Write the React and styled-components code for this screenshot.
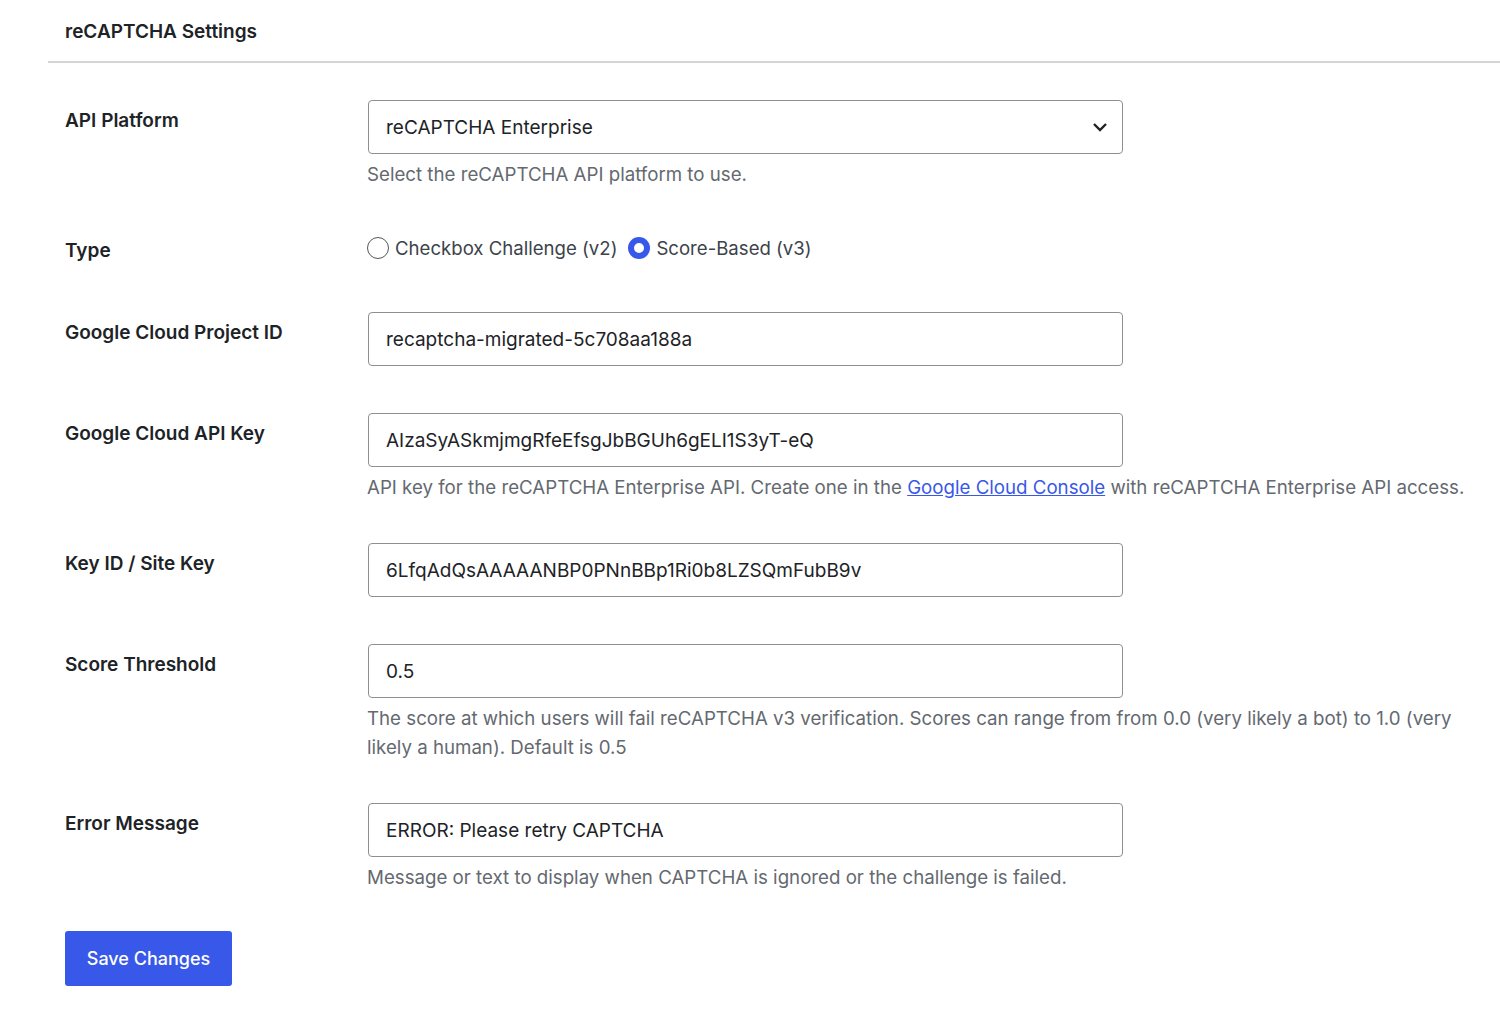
import React, { useState } from 'react';
import styled, { createGlobalStyle } from 'styled-components';

const GlobalStyle = createGlobalStyle`
  body {
    margin: 0;
    background: #ffffff;
    font-family: Inter, 'Noto Sans', 'Liberation Sans', sans-serif;
    color: #1d2327;
  }
`;

const Page = styled.div`
  padding-left: 48px;
  width: 1452px;
`;

const Header = styled.div`
  border-bottom: 2px solid #d5d5d7;
  padding: 19px 0 16px 17px;
`;

const Title = styled.h2`
  margin: 0;
  font-size: 19px;
  line-height: 26px;
  font-weight: 600;
  color: #1d2327;
`;

const Form = styled.form`
  padding: 14px 0 0 17px;
`;

const Row = styled.div`
  display: grid;
  grid-template-columns: 302px 1113px;
  padding: 23px 0 ${(p) => (p.$hasHelp ? 18 : 24)}px;
`;

const Label = styled.label`
  padding-top: 9px;
  font-size: 19px;
  line-height: 24px;
  font-weight: 600;
  color: #1d2327;
`;

const Field = styled.div`
  display: flex;
  flex-direction: column;
  align-items: flex-start;
`;

const TextInput = styled.input`
  box-sizing: border-box;
  width: 755px;
  height: 54px;
  margin: 0 0 0 1px;
  padding: 0 17px;
  border: 1px solid #8c8f94;
  border-radius: 4px;
  font-family: inherit;
  font-size: 19px;
  color: #1d2327;
  background: #fff;
  outline: none;
`;

const SelectBox = styled.div`
  box-sizing: border-box;
  width: 755px;
  height: 54px;
  margin-left: 1px;
  padding: 0 17px;
  border: 1px solid #8c8f94;
  border-radius: 4px;
  display: flex;
  align-items: center;
  justify-content: space-between;
  font-size: 19px;
  color: #1d2327;
  cursor: pointer;
`;

const Chevron = styled.svg`
  width: 16px;
  height: 10px;
  margin-right: -3px;
`;

const Help = styled.p`
  margin: 6px 0 0;
  font-size: 18.7px;
  line-height: 29px;
  color: #646970;
`;

const HelpLink = styled.a`
  color: #3858e9;
  text-decoration: underline;
`;

const RadioGroup = styled.div`
  display: flex;
  align-items: center;
  height: 35px;
  gap: 11px;
`;

const RadioLabel = styled.label`
  display: flex;
  align-items: center;
  gap: 6px;
  font-size: 18.6px;
  color: #3c434a;
  cursor: pointer;
`;

const RadioDot = styled.span`
  box-sizing: border-box;
  width: 22px;
  height: 22px;
  border-radius: 50%;
  background: #fff;
  border: ${(p) => (p.$on ? '6px solid #3858e9' : '1.5px solid #50575e')};
`;

const Actions = styled.div`
  padding-top: 21px;
`;

const SaveButton = styled.button`
  width: 167px;
  height: 55px;
  border: none;
  border-radius: 3px;
  background: #3858e9;
  color: #fff;
  font-family: inherit;
  font-size: 18px;
  font-weight: 500;
  cursor: pointer;
`;

const fields = [
  { label: 'Google Cloud Project ID', value: 'recaptcha-migrated-5c708aa188a' },
  {
    label: 'Google Cloud API Key',
    value: 'AIzaSyASkmjmgRfeEfsgJbBGUh6gELI1S3yT-eQ',
    help: (
      <>
        API key for the reCAPTCHA Enterprise API. Create one in the{' '}
        <HelpLink href="#">Google Cloud Console</HelpLink> with reCAPTCHA Enterprise API access.
      </>
    ),
  },
  { label: 'Key ID / Site Key', value: '6LfqAdQsAAAAANBP0PNnBBp1Ri0b8LZSQmFubB9v' },
  {
    label: 'Score Threshold',
    value: '0.5',
    help: 'The score at which users will fail reCAPTCHA v3 verification. Scores can range from from 0.0 (very likely a bot) to 1.0 (very likely a human). Default is 0.5',
  },
  {
    label: 'Error Message',
    value: 'ERROR: Please retry CAPTCHA',
    help: 'Message or text to display when CAPTCHA is ignored or the challenge is failed.',
  },
];

export default function App() {
  const [type, setType] = useState('v3');

  return (
    <Page>
      <GlobalStyle />
      <Header>
        <Title>reCAPTCHA Settings</Title>
      </Header>
      <Form onSubmit={(e) => e.preventDefault()}>
        <Row $hasHelp>
          <Label>API Platform</Label>
          <Field>
            <SelectBox>
              reCAPTCHA Enterprise
              <Chevron viewBox="0 0 16 10">
                <path d="M2 2l6 6 6-6" fill="none" stroke="#1d2327" strokeWidth="2.4" />
              </Chevron>
            </SelectBox>
            <Help>Select the reCAPTCHA API platform to use.</Help>
          </Field>
        </Row>

        <Row>
          <Label>Type</Label>
          <Field>
            <RadioGroup>
              <RadioLabel onClick={() => setType('v2')}>
                <RadioDot $on={type === 'v2'} />
                Checkbox Challenge (v2)
              </RadioLabel>
              <RadioLabel onClick={() => setType('v3')}>
                <RadioDot $on={type === 'v3'} />
                Score-Based (v3)
              </RadioLabel>
            </RadioGroup>
          </Field>
        </Row>

        {fields.map((f) => (
          <Row key={f.label} $hasHelp={!!f.help}>
            <Label>{f.label}</Label>
            <Field>
              <TextInput defaultValue={f.value} />
              {f.help && <Help>{f.help}</Help>}
            </Field>
          </Row>
        ))}

        <Actions>
          <SaveButton type="submit">Save Changes</SaveButton>
        </Actions>
      </Form>
    </Page>
  );
}
